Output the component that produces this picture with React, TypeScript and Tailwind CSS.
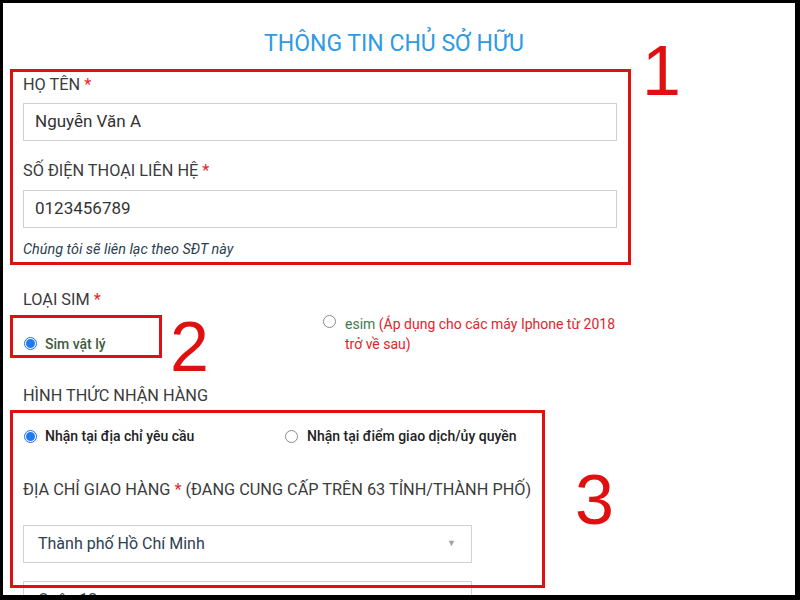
import type { ReactNode } from "react"

// radio dot drawn by hand so it looks the same everywhere
function Radio({ checked }: { checked?: boolean }) {
  if (checked) {
    return (
      <span className="flex h-[13px] w-[13px] shrink-0 items-center justify-center rounded-full border border-[#1f6fe0] bg-white">
        <span className="h-[9px] w-[9px] rounded-full bg-[#1f7af0]" />
      </span>
    )
  }
  return <span className="block h-[13px] w-[13px] shrink-0 rounded-full border border-[#8a8a8a] bg-white" />
}

function Label({ children, required }: { children: ReactNode; required?: boolean }) {
  return (
    <div className="h-[24px] text-[16.3px] leading-[24px] text-[#3b3b3b]">
      {children}
      {required && <span className="text-[#e0262c]"> *</span>}
    </div>
  )
}

function Field({ value }: { value: string }) {
  return (
    <div className="flex h-[38px] w-[594px] items-center border border-[#cfcfcf] bg-white px-[11px] text-[17px] text-[#333]">
      {value}
    </div>
  )
}

function Select({ value }: { value: string }) {
  return (
    <div className="flex h-[38px] w-[449px] items-center justify-between border border-[#d2d2d2] bg-white pl-[14px] pr-[15px] text-[16px] text-[#2c3e50]">
      <span>{value}</span>
      <span className="text-[9px] text-[#a0a0a0]">▼</span>
    </div>
  )
}

export default function App() {
  return (
    <div className="h-[600px] w-[800px] bg-black pb-[5px] pl-[3px] pr-[5px] pt-[3px] font-['Roboto',sans-serif]">
      <div className="relative h-full overflow-hidden bg-white">
        {/* owner info form */}
        <div className="pr-[10px] pt-[27px] text-center text-[23px] leading-[28px] text-[#2d9be3]">
          THÔNG TIN CHỦ SỞ HỮU
        </div>

        <div className="flex flex-col pl-[20px]">
          <div className="mt-[15px]">
            <Label required>HỌ TÊN</Label>
          </div>
          <div className="mt-[6px]">
            <Field value="Nguyễn Văn A" />
          </div>
          <div className="mt-[18px]">
            <Label required>SỐ ĐIỆN THOẠI LIÊN HỆ</Label>
          </div>
          <div className="mt-[7px]">
            <Field value="0123456789" />
          </div>
          <div className="mt-[13px] h-[18px] text-[14.4px] italic leading-[18px] text-[#2c3e50]">
            Chúng tôi sẽ liên lạc theo SĐT này
          </div>

          <div className="mt-[29px]">
            <Label required>LOẠI SIM</Label>
          </div>
          <div className="mt-[2px] flex text-[14px] font-medium leading-[20px]">
            <div className="flex w-[300px] items-center gap-[8px] pl-[1px] pt-[19px]">
              <Radio checked />
              <span className="text-[#3d5c40]">Sim vật lý</span>
            </div>
            <div className="flex gap-[9px]">
              <div className="pt-[1px]">
                <Radio />
              </div>
              <div className="w-[275px] font-normal text-[#e3242b]">
                <span className="text-[#3f7a4c]">esim</span> (Áp dụng cho các máy Iphone từ 2018 trở về sau)
              </div>
            </div>
          </div>

          <div className="mt-[30px]">
            <Label>HÌNH THỨC NHẬN HÀNG</Label>
          </div>
          <div className="mt-[18px] flex h-[20px] items-center text-[14px] font-medium text-[#222]">
            <div className="flex w-[262px] items-center gap-[8px] pl-[1px]">
              <Radio checked />
              <span>Nhận tại địa chỉ yêu cầu</span>
            </div>
            <div className="flex items-center gap-[9px]">
              <Radio />
              <span>Nhận tại điểm giao dịch/ủy quyền</span>
            </div>
          </div>

          <div className="mt-[32px]">
            <Label>
              ĐỊA CHỈ GIAO HÀNG<span className="text-[#e0262c]"> *</span> (ĐANG CUNG CẤP TRÊN 63 TỈNH/THÀNH PHỐ)
            </Label>
          </div>
          <div className="mt-[23px]">
            <Select value="Thành phố Hồ Chí Minh" />
          </div>
          <div className="mt-[18px]">
            <Select value="Quận 12" />
          </div>
        </div>

        {/* red callouts */}
        <div className="absolute left-[7px] top-[66px] h-[196px] w-[621px] border-[3px] border-[#e01010]" />
        <div className="absolute left-[7px] top-[312px] h-[43px] w-[152px] border-[3px] border-[#e01010]" />
        <div className="absolute left-[7px] top-[407px] h-[178px] w-[535px] border-[3px] border-[#e01010]" />
        <div className="absolute left-[639px] top-[28px] font-['Liberation_Sans',sans-serif] text-[70px] leading-[80px] text-[#e01010]">1</div>
        <div className="absolute left-[167px] top-[304px] font-['Liberation_Sans',sans-serif] text-[70px] leading-[80px] text-[#e01010]">2</div>
        <div className="absolute left-[572px] top-[457px] font-['Liberation_Sans',sans-serif] text-[70px] leading-[80px] text-[#e01010]">3</div>
      </div>
    </div>
  )
}
